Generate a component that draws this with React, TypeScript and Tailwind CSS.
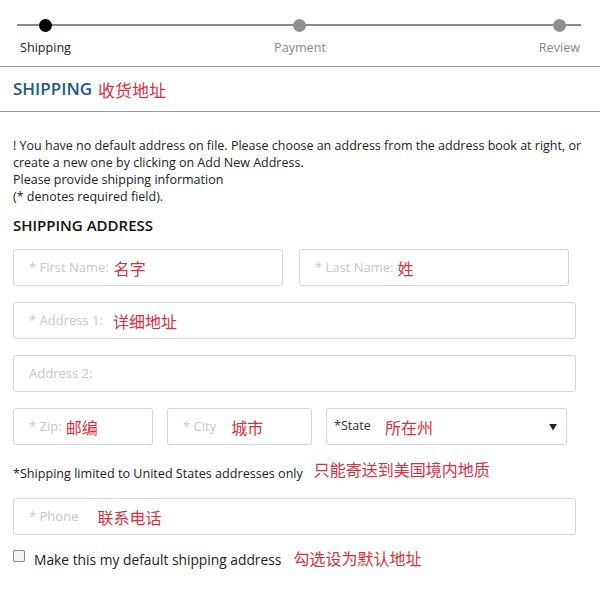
import React from 'react'

const font = { fontFamily: '"Open Sans", "Noto Sans CJK SC", sans-serif' }

function Note({ children, className = '' }: { children: React.ReactNode; className?: string }) {
  return <span className={`text-[16px] leading-none text-[#d9303e] ${className}`} style={{ fontFamily: '"Noto Sans CJK SC", sans-serif' }}>{children}</span>
}

function Box({ w, ph, note, noteMl, dark }: { w: string; ph: string; note?: string; noteMl?: string; dark?: boolean }) {
  return (
    <div className={`${w} h-[37px] border border-[#d6d6d6] rounded-[3px] flex items-center pl-[15px]`}>
      <span className={`text-[13px] ${dark ? 'text-[#333]' : 'text-[#c8c8c8]'}`}>{ph}</span>
      {note && <Note className={noteMl}>{note}</Note>}
    </div>
  )
}

export default function App() {
  const steps = ['Shipping', 'Payment', 'Review']
  const place = ['justify-self-start', 'justify-self-center', 'justify-self-end']
  return (
    <div className="w-[600px] h-[594px] bg-white text-[#222]" style={font}>
      <div className="relative border-b border-[#9a9a9a] pt-[19px] pb-[10px] px-[20px]">
        <div className="absolute left-[17px] right-[19px] top-[24px] h-[2px] bg-[#8a8a8a]" />
        <div className="relative grid grid-cols-3">
          {steps.map((s, i) => (
            <div key={s} className={`flex flex-col items-center ${place[i]}`}>
              <div className={`w-[13px] h-[13px] rounded-full ${i === 0 ? 'bg-black' : 'bg-[#8f8f8f]'}`} />
              <div className={`mt-[8px] text-[12.6px] leading-[16px] ${i === 0 ? 'text-[#222]' : 'text-[#888]'}`}>{s}</div>
            </div>
          ))}
        </div>
      </div>

      <div className="h-[45px] flex items-center pl-[13px] border-b border-[#9a9a9a]">
        <span className="text-[17px] font-semibold text-[#1d5a87]">SHIPPING</span>
        <Note className="ml-[6px] text-[17px]">收货地址</Note>
      </div>

      <div className="pl-[13px] pr-[10px]">
        <p className="pt-[25px] text-[12.5px] leading-[17px] text-[#222]">
          ! You have no default address on file. Please choose an address from the address book at right, or create a new one by clicking on Add New Address.
          <br />Please provide shipping information
          <br />(* denotes required field).
        </p>

        <div className="mt-[10px] text-[15px] leading-[20px] font-semibold text-[#111]">SHIPPING ADDRESS</div>

        <div className="mt-[14px] flex gap-[16px]">
          <Box w="w-[270px]" ph="* First Name:" note="名字" noteMl="ml-[5px]" />
          <Box w="w-[270px]" ph="* Last Name:" note="姓" noteMl="ml-[4px]" />
        </div>
        <div className="mt-[16px]"><Box w="w-[563px]" ph="* Address 1:" note="详细地址" noteMl="ml-[10px]" /></div>
        <div className="mt-[16px]"><Box w="w-[563px]" ph="Address 2:" /></div>
        <div className="mt-[16px] flex gap-[14px]">
          <Box w="w-[140px]" ph="* Zip:" note="邮编" noteMl="ml-[4px]" />
          <Box w="w-[145px]" ph="* City" note="城市" noteMl="ml-[15px]" />
          <div className="w-[241px] h-[37px] border border-[#d6d6d6] rounded-[3px] flex items-center pl-[7px] pr-[9px]">
            <span className="text-[12.6px] text-[#333]">*State</span>
            <Note className="ml-[14px]">所在州</Note>
            <span className="ml-auto text-[8px] text-[#222]">▼</span>
          </div>
        </div>

        <div className="mt-[19px] flex items-end h-[20px]">
          <span className="text-[12.6px] leading-[20px] text-[#222]">*Shipping limited to United States addresses only</span>
          <Note className="ml-[11px] mb-[7px]">只能寄送到美国境内地质</Note>
        </div>

        <div className="mt-[14px]"><Box w="w-[563px]" ph="* Phone" note="联系电话" noteMl="ml-[19px]" /></div>

        <div className="mt-[13px] flex items-center h-[20px]">
          <span className="w-[12px] h-[12px] -mt-[5px] border border-[#888] rounded-[2px] bg-[#f2f2f2]" />
          <span className="ml-[9px] mt-[4px] text-[13.8px] text-[#222]">Make this my default shipping address</span>
          <Note className="ml-[12px]">勾选设为默认地址</Note>
        </div>
      </div>
    </div>
  )
}
